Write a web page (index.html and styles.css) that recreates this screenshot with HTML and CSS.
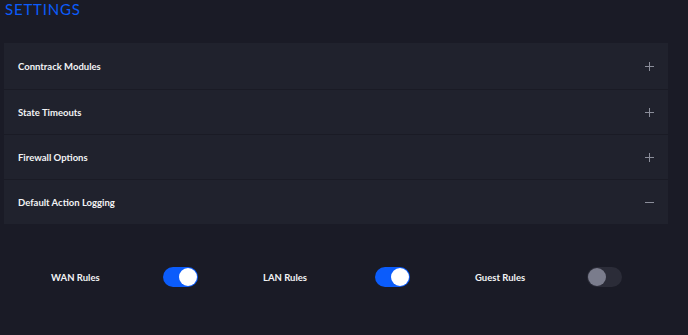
FILE: index.html
```html
<!DOCTYPE html>
<html lang="en">
<head>
  <meta charset="UTF-8">
  <meta name="viewport" content="width=device-width, initial-scale=1.0">
  <title>Settings</title>
  <link rel="stylesheet" href="styles.css">
</head>
<body>
  <h1 class="title">SETTINGS</h1>

  <div class="panel">
    <div class="row">
      <span class="row-label">Conntrack Modules</span>
      <svg class="icon" width="9" height="9" viewBox="0 0 9 9"><path d="M4.5 0V9M0 4.5H9" stroke="#8b8e9a" stroke-width="1"/></svg>
    </div>
    <div class="row">
      <span class="row-label">State Timeouts</span>
      <svg class="icon" width="9" height="9" viewBox="0 0 9 9"><path d="M4.5 0V9M0 4.5H9" stroke="#8b8e9a" stroke-width="1"/></svg>
    </div>
    <div class="row">
      <span class="row-label">Firewall Options</span>
      <svg class="icon" width="9" height="9" viewBox="0 0 9 9"><path d="M4.5 0V9M0 4.5H9" stroke="#8b8e9a" stroke-width="1"/></svg>
    </div>
    <div class="row">
      <span class="row-label">Default Action Logging</span>
      <svg class="icon" width="9" height="9" viewBox="0 0 9 9"><path d="M0 4.5H9" stroke="#8b8e9a" stroke-width="1"/></svg>
    </div>
  </div>

  <div class="toggles">
    <div class="toggle-group">
      <span class="toggle-label">WAN Rules</span>
      <span class="switch on"><span class="knob"></span></span>
    </div>
    <div class="toggle-group">
      <span class="toggle-label">LAN Rules</span>
      <span class="switch on"><span class="knob"></span></span>
    </div>
    <div class="toggle-group">
      <span class="toggle-label">Guest Rules</span>
      <span class="switch"><span class="knob"></span></span>
    </div>
  </div>
</body>
</html>
```

FILE: styles.css
```css
body { margin: 0; padding: 0 20px 0 4px; font-family: 'Lato', 'Liberation Sans', sans-serif; background: #1a1b26; color: #fff; }
.title { margin: 0; padding: 0 0 0 1px; height: 43px; font-size: 15px; line-height: 18px; font-weight: 400; letter-spacing: 0.8px; color: #0b5cfb; }
.panel { background: #20222d; }
.row { display: flex; align-items: center; justify-content: space-between; box-sizing: border-box; height: 45px; padding: 0 14px; border-top: 1px solid #1a1b25; }
.row:first-child { border-top: none; height: 46px; }
.row-label { font-size: 9.5px; font-weight: 700; color: #f2f3f5; }
.icon { display: block; }
.toggles { display: flex; padding: 43px 0 0 47px; }
.toggle-group { display: flex; align-items: center; flex-shrink: 0; width: 212px; }
.toggle-label { width: 112px; font-size: 9.5px; font-weight: 700; color: #f2f3f5; }
.switch { display: flex; align-items: center; box-sizing: border-box; width: 35px; height: 20px; padding: 1px; border-radius: 10px; background: #2b2c38; }
.knob { width: 18px; height: 18px; border-radius: 50%; background: #7a7c8c; }
.switch.on { background: #0b5cfb; justify-content: flex-end; }
.switch.on .knob { background: #fff; }
```
